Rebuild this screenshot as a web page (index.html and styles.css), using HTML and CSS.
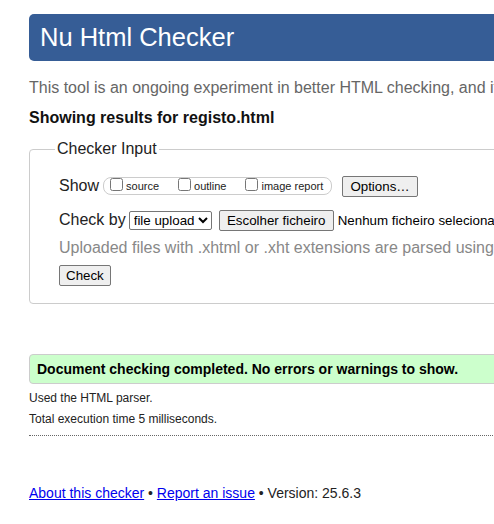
FILE: index.html
```html
<!DOCTYPE html>
<html lang="en">
<head>
<meta charset="utf-8">
<title>Showing results for registo.html - Nu Html Checker</title>
<link rel="stylesheet" href="styles.css">
</head>
<body>
<div class="page">
  <h1 class="banner">Nu Html Checker</h1>
  <p class="intro">This tool is an ongoing experiment in better HTML checking, and its behavior remains subject to change</p>
  <p class="showing">Showing results for registo.html</p>
  <form class="checker">
    <fieldset class="input-set">
      <legend class="legend">Checker Input</legend>
      <div class="row show-row">
        <span class="label-big">Show</span>
        <span class="options-group">
          <label class="opt"><input type="checkbox" class="cb">source</label>
          <label class="opt"><input type="checkbox" class="cb">outline</label>
          <label class="opt"><input type="checkbox" class="cb">image report</label>
        </span>
        <button type="button" class="btn options-btn">Options…</button>
      </div>
      <div class="row check-row">
        <span class="label-big check-label">Check by</span>
        <select class="sel"><option>file upload</option></select>
        <button type="button" class="btn file-btn">Escolher ficheiro</button>
        <span class="nofile">Nenhum ficheiro selecionado</span>
      </div>
      <p class="hint">Uploaded files with .xhtml or .xht extensions are parsed using the XML parser.</p>
      <div class="row submit-row">
        <button type="button" class="btn">Check</button>
      </div>
    </fieldset>
  </form>
  <p class="success">Document checking completed. No errors or warnings to show.</p>
  <p class="details">Used the HTML parser.</p>
  <p class="details">Total execution time 5 milliseconds.</p>
  <hr class="sep">
  <p class="footer"><a href="#">About this checker</a> • <a href="#">Report an issue</a> • Version: 25.6.3</p>
</div>
</body>
</html>
```

FILE: styles.css
```css
html {
  overflow: hidden;
}
body {
  margin: 0;
  font-family: "Liberation Sans", Arial, sans-serif;
  color: #222;
  background: #fff;
}
.page {
  width: 1000px;
  padding: 14px 0 0 29px;
}
.banner {
  margin: 0;
  height: 47px;
  box-sizing: border-box;
  padding: 8px 0 0 11px;
  background: #365d96;
  color: #fff;
  font-size: 25.5px;
  font-weight: normal;
  line-height: 30px;
  border-radius: 5px;
}
.intro {
  margin: 18px 0 0;
  font-size: 16px;
  line-height: 18px;
  color: #666;
  white-space: nowrap;
}
.showing {
  margin: 12px 0 0;
  font-size: 16px;
  line-height: 18px;
  font-weight: bold;
  color: #111;
}
.checker {
  margin: 13px 0 0;
}
.input-set {
  margin: 0;
  padding: 4px 29px 17px;
  border: 1px solid #ccc;
  border-radius: 4px;
}
.legend {
  margin-left: -4px;
  padding: 0 2px;
  font-size: 16px;
  color: #222;
}
.row {
  display: flex;
  align-items: center;
  white-space: nowrap;
}
.show-row {
  margin-top: 13px;
  height: 22px;
}
.label-big {
  font-size: 16px;
  margin-right: 4px;
  color: #222;
}
.check-label {
  margin-right: 3px;
}
.options-group {
  display: inline-flex;
  align-items: center;
  height: 18px;
  box-sizing: border-box;
  border: 1px solid #ccc;
  border-radius: 8px;
  padding: 0 4px 0 3px;
  margin-right: 10px;
  width: 229px;
}
.opt {
  display: inline-flex;
  align-items: flex-end;
  font-size: 11px;
  line-height: 13px;
  color: #222;
  margin-right: 16px;
}
.opt:last-child {
  margin-right: 0;
}
.cb {
  margin: 0 3px 0 3px;
  width: 13px;
  height: 13px;
  position: relative;
  top: -2px;
}
.btn {
  font-family: "Liberation Sans", Arial, sans-serif;
  font-size: 13.33px;
  height: 21px;
  padding: 1px 6px;
  border: 1px solid #767676;
  border-radius: 2px;
  background: #efefef;
  color: #000;
}
.options-btn {
  width: 76px;
}
.check-row {
  margin-top: 12px;
  height: 22px;
}
.sel {
  font-family: "Liberation Sans", Arial, sans-serif;
  font-size: 13.33px;
  height: 19px;
  width: 83px;
  margin-right: 7px;
  border: 1px solid #767676;
  border-radius: 2px;
  background: #fff;
  color: #000;
}
.file-btn {
  width: 115px;
  margin-right: 4px;
}
.nofile {
  font-size: 13.33px;
  color: #000;
}
.hint {
  margin: 8px 0 0;
  font-size: 16px;
  line-height: 18px;
  color: #888;
  white-space: nowrap;
}
.submit-row {
  margin-top: 8px;
}
.success {
  margin: 50px 0 0;
  height: 30px;
  box-sizing: border-box;
  padding: 6px 7px;
  background: #ccffcc;
  border: 1px solid #ccc;
  border-radius: 4px;
  font-size: 14px;
  line-height: 16px;
  font-weight: bold;
  color: #000;
}
.details {
  margin: 7px 0 0;
  font-size: 12px;
  line-height: 14px;
  color: #222;
}
.sep {
  margin: 9px 0 0;
  border: 0;
  border-top: 1px dotted #666;
  height: 0;
}
.footer {
  margin: 49px 0 0;
  font-size: 14px;
  line-height: 16px;
  color: #222;
}
.footer a {
  color: #00e;
}
```
